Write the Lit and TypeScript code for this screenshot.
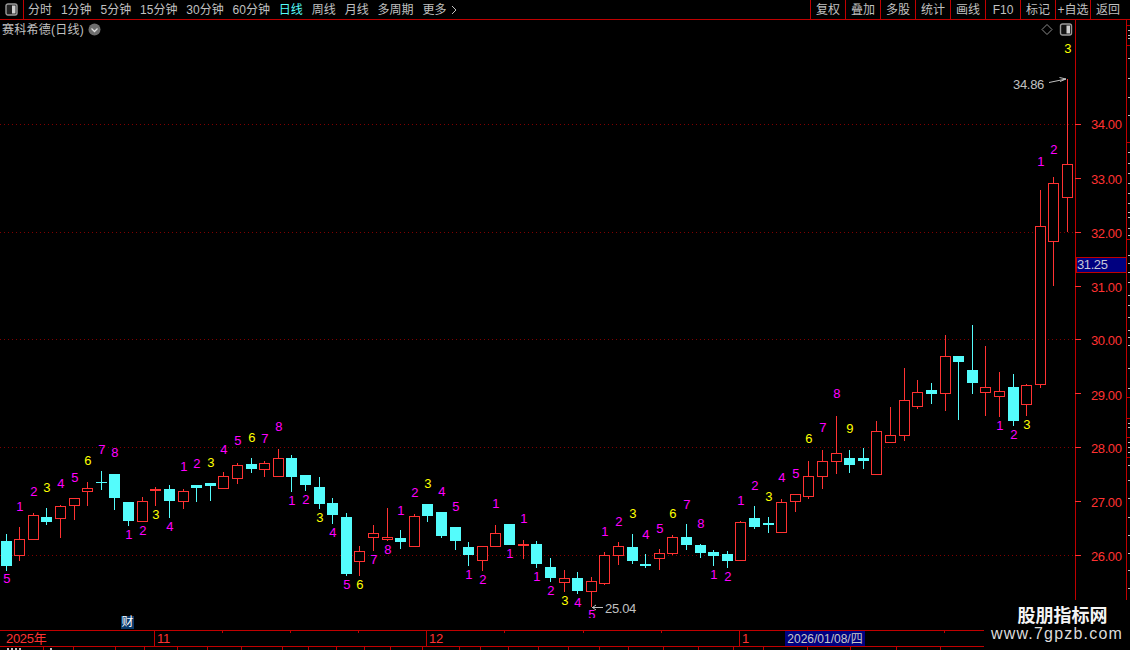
import { LitElement, html, svg, css } from "lit";
import { customElement } from "lit/decorators.js";

type Candle = [number, "r" | "c", number, number, number, number];
const candles: Candle[] = [
  [6,"c",541,566,534,571],[19,"r",539,556,527,561],[33,"r",515,540,513,540],[46,"c",517,522,508,525],
  [60,"r",506,519,505,538],[74,"r",498,506,498,520],[87,"r",488,492,482,506],[101,"c",482,483,471,490],
  [114,"c",474,498,474,510],[128,"c",502,521,502,526],[142,"r",501,522,497,522],[155,"r",489,491,487,506],
  [169,"c",489,501,485,518],[183,"r",491,502,489,509],[196,"c",485,488,485,502],[210,"c",483,486,483,501],
  [223,"r",476,489,472,489],[237,"r",465,479,463,484],[251,"c",464,469,458,473],[264,"r",463,470,461,477],
  [278,"r",458,477,449,477],[291,"c",458,477,455,492],[305,"c",475,485,475,491],[319,"c",487,504,477,509],
  [332,"c",503,515,498,524],[346,"c",517,574,513,576],[359,"r",551,562,546,576],[373,"r",533,538,525,551],
  [387,"r",537,540,508,541],[400,"c",538,542,530,549],[414,"r",516,547,514,547],[427,"c",504,516,504,522],
  [441,"c",512,536,512,538],[455,"c",527,541,527,550],[468,"c",547,555,542,566],[482,"r",546,561,546,571],
  [495,"r",533,547,525,547],[509,"c",524,545,524,545],[523,"r",544,546,540,559],[536,"c",544,564,541,568],
  [550,"c",567,578,558,582],[564,"r",578,583,570,592],[577,"c",578,591,572,594],[591,"r",581,592,577,607],
  [604,"r",555,584,552,585],[618,"r",546,556,542,565],[632,"c",547,561,534,564],[645,"c",564,566,554,568],
  [659,"r",553,559,549,570],[672,"r",537,554,535,555],[686,"c",537,545,524,550],[700,"c",545,553,544,558],
  [713,"c",552,556,550,566],[727,"c",554,561,551,568],[740,"r",522,561,521,561],[754,"c",518,527,506,529],
  [768,"c",523,525,517,533],[781,"r",502,533,499,533],[795,"r",494,502,494,512],[808,"r",476,497,461,499],
  [822,"r",461,477,450,489],[836,"r",453,462,416,474],[849,"c",458,465,450,473],[863,"c",458,461,448,469],
  [876,"r",431,475,421,475],[890,"r",435,443,407,443],[904,"r",400,436,368,441],[917,"r",392,407,380,409],
  [931,"c",390,394,383,404],[945,"r",356,394,335,411],[958,"c",356,362,356,420],[972,"c",370,383,325,394],
  [985,"r",387,393,346,416],[999,"r",391,397,372,417],[1013,"c",387,421,374,426],[1026,"r",385,405,384,416],
  [1040,"r",226,385,190,388],[1053,"r",183,242,177,286],[1067,"r",164,198,79,232],
];

type Label = [number, number, string, "m" | "y"];
const labels: Label[] = [
  [6,578,"5","m"],[19,506,"1","m"],[33,491,"2","m"],[46,487,"3","y"],[60,483,"4","m"],[74,477,"5","m"],
  [87,460,"6","y"],[101,449,"7","m"],[114,452,"8","m"],[128,534,"1","m"],[142,530,"2","m"],[155,514,"3","y"],
  [169,526,"4","m"],[183,466,"1","m"],[196,463,"2","m"],[210,462,"3","y"],[223,449,"4","m"],[237,440,"5","m"],
  [251,437,"6","y"],[264,438,"7","m"],[278,426,"8","m"],[291,500,"1","m"],[305,499,"2","m"],[319,517,"3","y"],
  [332,532,"4","m"],[346,584,"5","m"],[359,584,"6","y"],[373,559,"7","m"],[387,549,"8","m"],[400,510,"1","m"],
  [414,492,"2","m"],[427,483,"3","y"],[441,491,"4","m"],[455,506,"5","m"],[468,574,"1","m"],[482,579,"2","m"],
  [495,503,"1","m"],[509,553,"1","m"],[523,518,"1","m"],[536,576,"1","m"],[550,590,"2","m"],[564,600,"3","y"],
  [577,602,"4","m"],[591,614,"5","m"],[604,531,"1","m"],[618,521,"2","m"],[632,513,"3","y"],[645,534,"4","m"],
  [659,528,"5","m"],[672,513,"6","y"],[686,504,"7","m"],[700,523,"8","m"],[713,574,"1","m"],[727,576,"2","m"],
  [740,500,"1","m"],[754,485,"2","m"],[768,496,"3","y"],[781,477,"4","m"],[795,473,"5","m"],[808,438,"6","y"],
  [822,427,"7","m"],[836,393,"8","m"],[849,428,"9","y"],[999,425,"1","m"],[1013,434,"2","m"],[1026,424,"3","y"],
  [1040,161,"1","m"],[1053,149,"2","m"],[1067,48,"3","y"],
];

const gridY = [124, 232, 339, 447, 555];
const axisTicks: [number, string, number][] = [
  [124,"34.00",124.5],[178,"33.00",179.5],[232,"32.00",233],[286,"31.00",287.5],[339,"30.00",340],
  [393,"29.00",395],[447,"28.00",448.5],[501,"27.00",502.5],[555,"26.00",556.5],
];
const rulerRed = [25,45,142,239,397,418,437,457];
const rulerGray = [30,35,38,58,78,97,115,152,163,173,183,193,203,212,217,228,235,255,263,272,282,295,305,
  317,330,337,345,368,388,423,427,442,447,452,465,480,498,517,535,553,570,588];

const tabs = ["分时","1分钟","5分钟","15分钟","30分钟","60分钟","日线","周线","月线","多周期"];
const buttons = ["复权","叠加","多股","统计","画线","F10","标记","+自选","返回"];
const months: [number, string][] = [[154,"2025年"],[272,"11"],[313,"12"],[46,"1"]];
const topTicks = [222,290,358,504,583,661,944];
const bottomTicks = [43,73,115,144,177,207,241,282,308,336,364,390,422,459,480,508,538,568,599,628,663,698,733,763,807,850,896,940];

const panelIcon = html`<svg class="panel" width="13" height="13" viewBox="0 0 13 13">
  <rect x="1" y="1" width="11" height="11" rx="2" fill="#222" stroke="#9a9a9a" stroke-width="1.4"></rect>
  <rect x="7" y="2.5" width="3.5" height="8" fill="#cfcfcf"></rect>
</svg>`;

@customElement("app-root")
export class AppRoot extends LitElement {
  static styles = css`
    :host {
      display: block;
      width: 1130px;
      height: 650px;
      overflow: hidden;
      background: #000;
      color: #c0c0c0;
      font: 12px/1 "Liberation Sans", "Noto Sans CJK SC", sans-serif;
    }
    .toolbar {
      display: flex;
      align-items: center;
      justify-content: space-between;
      height: 19px;
      border-bottom: 1px solid #c00000;
    }
    .left { display: flex; align-items: center; height: 100%; }
    .menu-icon {
      display: flex;
      align-items: center;
      justify-content: center;
      width: 23px;
      height: 100%;
      border-right: 1px solid #c00000;
      margin-right: 4px;
    }
    .tabs { display: flex; gap: 8.9px; align-items: center; }
    .tab { white-space: nowrap; }
    .tab.on { color: #54fcfc; }
    .more { display: flex; align-items: center; gap: 5px; }
    .right { display: flex; height: 100%; margin-right: 5px; }
    .btn {
      display: flex;
      align-items: center;
      justify-content: center;
      width: 34px;
      height: 100%;
      border-left: 1px solid #c00000;
      white-space: nowrap;
    }
    .chart { position: relative; height: 610px; }
    .plot { display: block; width: 1130px; height: 610px; }
    .title {
      position: absolute;
      left: 2px;
      top: 3px;
      display: flex;
      align-items: center;
      gap: 4px;
      height: 13px;
      letter-spacing: 0.25px;
    }
    .cai {
      position: absolute;
      left: 121px;
      top: 596px;
      width: 13px;
      height: 13px;
      background: #0a3a6a;
      color: #fff;
      text-align: center;
      line-height: 13px;
    }
    .timeline {
      position: relative;
      display: flex;
      height: 15px;
      border-top: 1px solid #c00000;
      border-bottom: 1px solid #c00000;
      color: #ff3232;
      font-size: 13px;
    }
    .cell { display: flex; align-items: center; padding-left: 2px; box-sizing: border-box; white-space: nowrap; letter-spacing: -0.3px; }
    .cell:first-child { padding-left: 6px; }
    .cell + .cell { border-left: 1px solid #c00000; }
    .date {
      display: flex;
      align-items: center;
      justify-content: center;
      width: 80px;
      background: #000080;
      color: #c8c8c8;
      white-space: nowrap;
      font-size: 12px;
    }
    .ticks { position: absolute; left: 0; top: 0; }
    .strip { display: block; }
    .watermark {
      position: absolute;
      right: 0;
      bottom: 0;
      width: 146px;
      height: 50px;
      box-sizing: border-box;
      padding-top: 4px;
      background: #000;
      color: #fff;
      text-align: center;
    }
    .wm-cn { font-size: 18px; line-height: 24px; font-weight: 700; color: #f4f4f4; margin-left: 11px; }
    .wm-url { font-size: 16px; line-height: 18px; letter-spacing: 1.2px; color: #dcdcdc; white-space: nowrap; margin-top: -3px; }
    svg text { font-family: "Liberation Sans", sans-serif; font-size: 13px; letter-spacing: -0.5px; }
    .m { fill: #ff00ff; }
    .y { fill: #ffff00; }
    .tip { fill: #c0c0c0; letter-spacing: -0.3px; }
    .ax { fill: #ff3232; letter-spacing: -0.4px; }
    .cur { fill: #c8c8d8; letter-spacing: -0.4px; }
    .crisp { shape-rendering: crispEdges; }
    .root { position: relative; }
  `;

  private candle([x, kind, top, bot, wt, wb]: Candle) {
    const fill = kind === "r" ? "#ff3232" : "#54fcfc";
    const wick = svg`<rect x=${x} y=${wt} width="1" height=${wb - wt} fill=${fill}></rect>`;
    if (kind === "c" || bot - top < 3) {
      return svg`${wick}<rect x=${x - 5} y=${top} width="11" height=${Math.max(bot - top, 1)} fill=${fill}></rect>`;
    }
    return svg`${wick}<rect x=${x - 4.5} y=${top + 0.5} width="10" height=${bot - top - 1} fill="#000" stroke=${fill}></rect>`;
  }

  render() {
    return html`<div class="root">
      <div class="toolbar">
        <div class="left">
          <div class="menu-icon">${panelIcon}</div>
          <div class="tabs">
            ${tabs.map((t) => html`<span class="tab ${t === "日线" ? "on" : ""}">${t}</span>`)}
            <span class="tab more">更多<svg width="6" height="10" viewBox="0 0 6 10"><path d="M1 1l4 4-4 4" fill="none" stroke="#c0c0c0"></path></svg></span>
          </div>
        </div>
        <div class="right">
          ${buttons.map((b) => html`<div class="btn">${b}</div>`)}
        </div>
      </div>
      <div class="chart">
        <svg class="plot" viewBox="0 20 1130 610">
          <g class="crisp">
            ${gridY.map((y) => svg`<line x1="0" x2="1075" y1=${y + 0.5} y2=${y + 0.5} stroke="#800000" stroke-dasharray="1 3"></line>`)}
            ${candles.map((c) => this.candle(c))}
            <rect x="1075" y="20" width="1" height="580" fill="#c00000"></rect>
            <rect x="1126" y="20" width="1" height="581" fill="#c00000"></rect>
            ${axisTicks.map(([y]) => svg`<rect x="1075" y=${y} width="6" height="1" fill="#ff3232"></rect>`)}
            ${rulerRed.map((y) => svg`<rect x="1126" y=${y} width="4" height="1" fill="#c00000"></rect>`)}
            ${rulerGray.map((y) => svg`<rect x="1128" y=${y} width="2" height="1" fill="#c0c0c0"></rect>`)}
            <rect x="1076" y="257" width="50" height="15" fill="#000080" stroke="#c00000"></rect>
          </g>
          ${labels.map(([x, y, t, c]) => svg`<text class=${c} x=${x + 0.5} y=${y + 4.5} text-anchor="middle">${t}</text>`)}
          <rect x="585" y="618" width="14" height="4" fill="#000"></rect>
          ${axisTicks.map(([, t, y]) => svg`<text class="ax" x="1091" y=${y + 4.5}>${t}</text>`)}
          <text class="cur" x="1077" y="269">31.25</text>
          <text class="tip" x="1013" y="88.5">34.86</text>
          <path d="M1049 82.5L1066 79M1059.5 77.5L1066 79L1060 81.5" fill="none" stroke="#c0c0c0"></path>
          <text class="tip" x="605" y="613">25.04</text>
          <path d="M592 607.5H603M596 605L592.5 607.5L596 610" fill="none" stroke="#c0c0c0"></path>
          <path d="M1047 24.5L1052 29.5L1047 34.5L1042 29.5Z" fill="none" stroke="#8c8c8c"></path>
          <g transform="translate(1059.5 23)">
            <rect x="1" y="1" width="11" height="11" rx="2" fill="#111" stroke="#9a9a9a" stroke-width="1.4"></rect>
            <rect x="7" y="2.5" width="3.5" height="8" fill="#cfcfcf"></rect>
          </g>
        </svg>
        <div class="title">
          <span>赛科希德(日线)</span>
          <svg width="13" height="13" viewBox="0 0 13 13">
            <circle cx="6.5" cy="6.5" r="6" fill="#6e6e6e"></circle>
            <path d="M3.5 5.5l3 3 3-3" fill="none" stroke="#e0e0e0" stroke-width="1.3"></path>
          </svg>
        </div>
        <div class="cai">财</div>
      </div>
      <div class="timeline">
        ${months.map(([w, t]) => html`<div class="cell" style="width:${w}px">${t}</div>`)}
        <div class="date">2026/01/08/四</div>
        <svg class="ticks" width="1130" height="3">
          ${topTicks.map((x) => svg`<rect x=${x} y="0" width="1" height="2" fill="#c00000"></rect>`)}
        </svg>
      </div>
      <svg class="strip" width="1130" height="3">
        ${bottomTicks.map((x) => svg`<rect x=${x} y="0" width="1" height="3" fill="#c00000"></rect>`)}
        ${[7, 11, 15, 19, 50].map((x) => svg`<rect x=${x} y="1" width="2" height="2" fill="#c0c0c0"></rect>`)}
      </svg>
      <div class="watermark">
        <div class="wm-cn">股朋指标网</div>
        <div class="wm-url">www.7gpzb.com</div>
      </div>
    </div>`;
  }
}
